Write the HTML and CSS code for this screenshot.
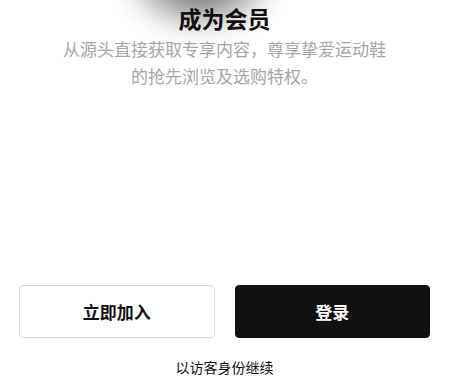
FILE: index.html
```html
<!DOCTYPE html>
<html lang="zh-CN">
<head>
    <meta charset="UTF-8">
    <meta name="viewport" content="width=device-width, initial-scale=1.0">
    <title>成为会员</title>
    <link rel="stylesheet" href="styles.css">
</head>
<body>

    <div class="page">
        <div class="shade"></div>

        <div class="intro">
            <h1>成为会员</h1>
            <p>从源头直接获取专享内容，尊享挚爱运动鞋<br>的抢先浏览及选购特权。</p>
        </div>

        <div class="actions">
            <button class="btn btn-light">立即加入</button>
            <button class="btn btn-dark">登录</button>
        </div>

        <a href="#" class="guest">以访客身份继续</a>
    </div>

</body>
</html>
```

FILE: styles.css
```css
body {
    margin: 0;
    padding: 0;
    background-color: #fff;
    font-family: "Noto Sans CJK SC", "Noto Sans", sans-serif;
    color: #111;
}

.page {
    position: relative;
    width: 449px;
    height: 383px;
    overflow: hidden;
    display: flex;
    flex-direction: column;
}

/* soft shadow left by the picture above */
.shade {
    position: absolute;
    left: 120px;
    top: -85px;
    width: 160px;
    height: 120px;
    border-radius: 50%;
    background: radial-gradient(ellipse at 50% 45%, rgba(0, 0, 0, 0.55) 25%, rgba(0, 0, 0, 0.25) 50%, rgba(0, 0, 0, 0) 75%);
    filter: blur(10px);
}

.intro {
    position: relative;
    text-align: center;
    padding-top: 1px;
}

.intro h1 {
    margin: 0;
    font-size: 23px;
    font-weight: 700;
    line-height: 34px;
}

.intro p {
    margin: 0;
    font-size: 17px;
    line-height: 27px;
    color: #a6a6a6;
}

.actions {
    display: flex;
    gap: 20px;
    padding: 0 19px;
    margin-top: auto;
}

.btn {
    flex: 1;
    height: 53px;
    border-radius: 4px;
    font-family: inherit;
    font-size: 17px;
    font-weight: 700;
    cursor: pointer;
}

.btn-light {
    background-color: #fff;
    border: 1px solid #d9d9d9;
    color: #111;
}

.btn-dark {
    background-color: #111;
    border: 1px solid #111;
    color: #fff;
}

.guest {
    display: block;
    text-align: center;
    font-size: 14px;
    line-height: 20px;
    color: #111;
    text-decoration: none;
    margin: 19px 0 6px;
}
```
